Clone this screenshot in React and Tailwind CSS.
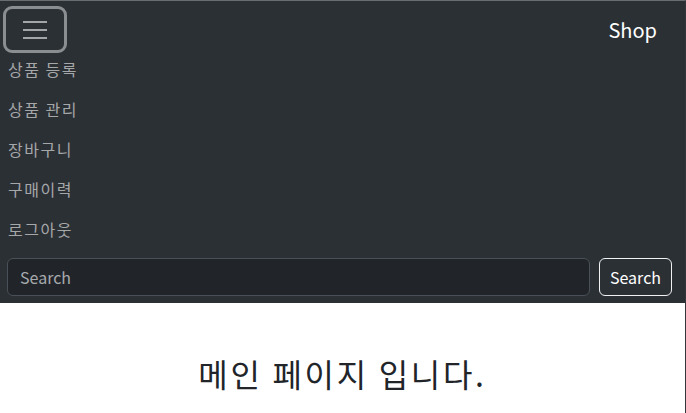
export default function App() {
  const menus = ['상품 등록', '상품 관리', '장바구니', '구매이력', '로그아웃'];

  return (
    <div className="w-[686px] min-h-[413px] bg-white border-t border-t-[#6a6d70] border-r border-r-[#33373b] font-['Noto_Sans_CJK_KR',sans-serif]">
      {/* Navbar */}
      <nav className="bg-[#2b3035] pb-[7px]">
        <div className="flex items-start justify-between h-[48px]">
          <button className="ml-[3px] mt-[5px] -mb-[4px] w-[64px] h-[47px] border-[3px] border-[#8b8e91] rounded-[9px] flex flex-col items-center justify-center gap-[6px]">
            <span className="block w-[24px] h-[2px] bg-[#a3a6a9]" />
            <span className="block w-[24px] h-[2px] bg-[#a3a6a9]" />
            <span className="block w-[24px] h-[2px] bg-[#a3a6a9]" />
          </button>
          <span className="mt-[14px] mr-[28px] text-[20px] leading-[30px] text-white">Shop</span>
        </div>

        <ul>
          {menus.map((m) => (
            <li key={m} className="h-10 flex items-center px-2 text-[16px] tracking-[1.5px] text-[#a5a7a9]">
              {m}
            </li>
          ))}
        </ul>

        <form className="flex items-center gap-[9px] pl-[7px] pr-[13px] mt-[9px]">
          <input
            type="text"
            placeholder="Search"
            className="flex-1 h-[38px] bg-[#212529] border border-[#495057] rounded-[6px] px-[12px] text-[16px] text-white placeholder:text-[#a7aaad] outline-none"
          />
          <button
            type="button"
            className="w-[73px] h-[38px] border border-[#f0f1f2] rounded-[6px] text-[16px] text-white"
          >
            Search
          </button>
        </form>
      </nav>

      {/* Main */}
      <main className="pt-[51px] text-center">
        <h1 className="text-[32px] leading-[38px] tracking-[2.7px] font-normal text-[#212529]">메인 페이지 입니다.</h1>
      </main>
    </div>
  );
}
